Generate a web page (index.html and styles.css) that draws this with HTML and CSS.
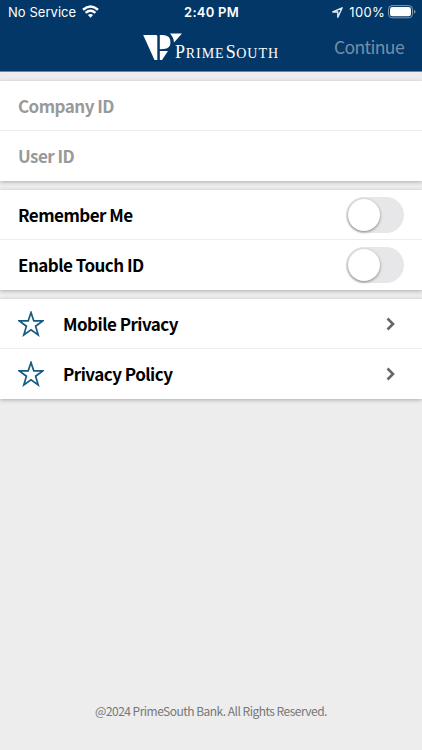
FILE: index.html
```html
<!DOCTYPE html>
<html lang="en">
<head>
<meta charset="utf-8">
<title>PrimeSouth</title>
<link rel="stylesheet" href="styles.css">
</head>
<body>
<header class="header">
  <div class="status">
    <div class="status-left">
      <span class="carrier">No Service</span>
      <svg class="wifi" width="17" height="13" viewBox="0 0 17 13" fill="none" stroke="#fff" stroke-width="2.5"><path d="M1 4.700Q8.500-1.800 16 4.700M3.600 7.900Q8.500 3.700 13.400 7.900"/><path d="M5.900 10Q8.500 7.800 11.100 10L8.500 12.700Z" fill="#fff" stroke="none"/></svg>
    </div>
    <span class="time">2:40 PM</span>
    <div class="status-right">
      <svg class="location" width="11" height="11" viewBox="0 0 11 11" fill="none" stroke="#e4ecf4" stroke-width="1.400" stroke-linejoin="round"><path d="M10.200 .8L.8 5H5.800V10.200Z"/></svg>
      <span class="percent">100%</span>
      <svg class="battery" width="28" height="14" viewBox="0 0 28 14"><rect x=".5" y=".6" width="24" height="12.200" rx="3.600" fill="none" stroke="#7f9ab4"/><rect x="2" y="2.100" width="21" height="9.200" rx="2.300" fill="#fff"/><path d="M26 4.800Q27.500 5.300 27.500 6.700T26 8.600Z" fill="#7f9ab4"/></svg>
    </div>
  </div>
  <div class="navbar">
    <div class="logo">
      <svg class="emblem" width="40" height="28" viewBox="0 0 40 28" fill="#fff"><path d="M.2 2H13Q14.300 2 14.300 3.300V27H11.500Z"/><path d="M16.800 2H20.500Q27.500 2.500 27.500 9.200T20.500 16L16.800 16.300Z"/><path d="M16.800 18H25L19 27H16.800Z"/><path d="M27 .5H39L31 9.500Q30.500 4 27 .5Z"/></svg>
      <span class="wordmark">P<small>RIME</small><span class="south">S<small>OUTH</small></span></span>
    </div>
    <span class="continue">Continue</span>
  </div>
</header>
<main>
  <section class="group fields">
    <div class="row"><span class="label">Company ID</span></div>
    <div class="row"><span class="label">User ID</span></div>
  </section>
  <section class="group">
    <div class="row"><span class="label">Remember Me</span><span class="switch"></span></div>
    <div class="row"><span class="label">Enable Touch ID</span><span class="switch"></span></div>
  </section>
  <section class="group">
    <div class="row">
      <svg class="star" width="26" height="26" viewBox="0 0 26 26"><path d="M13 1.500L15.800 9.900H24.800L17.600 15.200L20.200 23.900L13 18.700L5.800 23.900L8.400 15.200L1.200 9.900H10.200Z"/></svg>
      <span class="label">Mobile Privacy</span>
      <svg class="chevron" width="10" height="14" viewBox="0 0 10 14"><path d="M1.500 1.500L7 7L1.500 12.500"/></svg>
    </div>
    <div class="row">
      <svg class="star" width="26" height="26" viewBox="0 0 26 26"><path d="M13 1.500L15.800 9.900H24.800L17.600 15.200L20.200 23.900L13 18.700L5.800 23.900L8.400 15.200L1.200 9.900H10.200Z"/></svg>
      <span class="label">Privacy Policy</span>
      <svg class="chevron" width="10" height="14" viewBox="0 0 10 14"><path d="M1.500 1.500L7 7L1.500 12.500"/></svg>
    </div>
  </section>
</main>
<footer class="footer">@2024 PrimeSouth Bank. All Rights Reserved.</footer>
</body>
</html>
```
FILE: styles.css
```css
* { box-sizing: border-box; }
body {
  margin: 0;
  height: 750px;
  overflow: hidden;
  display: flex;
  flex-direction: column;
  background: #ededed;
  color: #000;
  font-family: "Noto Sans CJK SC", "Noto Sans", sans-serif;
}
.header {
  height: 72px;
  background: #033767;
  color: #fff;
  border-bottom: 1px solid #6a88a5;
}
.status {
  height: 24px;
  display: grid;
  grid-template-columns: 1fr auto 1fr;
  align-items: center;
  padding: 0 7px 0 8px;
  font: 13px/24px Inter, sans-serif;
}
.status-left, .status-right { display: flex; align-items: center; }
.carrier { letter-spacing: .05px; }
.wifi { margin-left: 6px; margin-top: -1px; }
.time { font-weight: 600; letter-spacing: .25px; }
.status-right { justify-content: flex-end; }
.battery { margin-right: -1px; margin-top: -1px; }
.location { margin-right: 6px; }
.percent { margin-right: 3px; letter-spacing: .3px; }
.navbar {
  height: 47px;
  display: grid;
  grid-template-columns: 143px 1fr auto;
  align-items: center;
  padding-right: 18px;
}
.logo { grid-column: 2; display: flex; height: 30px; }
.emblem { flex: none; }
.wordmark {
  margin-left: -8px;
  padding-top: 8px;
  font: 18px/22px "Liberation Serif", serif;
  letter-spacing: .6px;
  white-space: nowrap;
}
.wordmark small { font-size: 14px; letter-spacing: 1px; }
.south { margin-left: 1px; }
.continue {
  color: #758fa9;
  font-size: 17.5px;
  line-height: 24px;
  letter-spacing: -.6px;
  padding-bottom: 1px;
}
.group {
  margin-top: 9px;
  height: 100px;
  background: #fff;
  box-shadow: 0 1px 4px rgba(0, 0, 0, .28);
}
.row {
  height: 50px;
  display: flex;
  align-items: center;
  padding: 0 18px;
  font-size: 17px;
  font-weight: 700;
  letter-spacing: -.53px;
}
.row:first-child { border-bottom: 1px solid #ededed; }
.label { padding-bottom: 2px; }
.row:first-child .label { padding-bottom: 1px; }
.fields .row { color: #999; }
.switch {
  margin-left: auto;
  width: 58px;
  height: 36px;
  border-radius: 18px;
  padding: 2px;
  background: #e7e7e9;
}
.row:first-child .switch { margin-top: 1px; }
.switch::before {
  content: "";
  display: block;
  width: 32px;
  height: 32px;
  border-radius: 50%;
  background: #fff;
  box-shadow: 0 1px 3px rgba(0, 0, 0, .45);
}
.star { margin-right: 19px; fill: none; stroke: #165a82; stroke-width: 1.700; }
.chevron { margin-left: auto; margin-right: 8px; fill: none; stroke: #666; stroke-width: 2.600; }
.footer {
  margin-top: auto;
  height: 76px;
  padding-top: 27px;
  text-align: center;
  color: #777;
  font-size: 12px;
  line-height: 20px;
  letter-spacing: -.52px;
}
```
